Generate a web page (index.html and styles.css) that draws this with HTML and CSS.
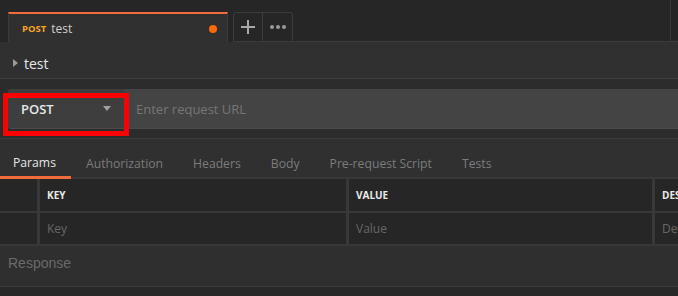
FILE: index.html
```html
<!DOCTYPE html>
<html lang="en">
<head>
  <meta charset="UTF-8" />
  <meta name="viewport" content="width=device-width, initial-scale=1.0"/>
  <title>Request Builder</title>
  <link rel="stylesheet" href="styles.css">
</head>
<body>
  <div class="tabbar">
    <div class="tab">
      <span class="tab-method">POST</span>
      <span class="tab-name">test</span>
      <span class="tab-dot"></span>
    </div>
    <div class="tab-btn first">
      <svg width="14" height="14" viewBox="0 0 14 14"><path d="M7 0v14M0 7h14" stroke="#a8a8a8" stroke-width="2"/></svg>
    </div>
    <div class="tab-btn last">
      <svg width="16" height="4" viewBox="0 0 16 4"><circle cx="2" cy="2" r="2" fill="#9a9a9a"/><circle cx="8" cy="2" r="2" fill="#9a9a9a"/><circle cx="14" cy="2" r="2" fill="#9a9a9a"/></svg>
    </div>
    <div class="tabbar-fill"></div>
    <div class="tabbar-end"></div>
  </div>

  <div class="request">
    <div class="req-name">
      <span class="caret-right"></span>
      <span>test</span>
    </div>

    <div class="url-wrap">
      <div class="url-bar">
        <div class="method">
          <span>POST</span>
          <span class="caret-down"></span>
        </div>
        <div class="url-input">Enter request URL</div>
      </div>
      <div class="highlight"></div>
    </div>

    <div class="tabs">
      <div class="tabs-item active">Params</div>
      <div class="tabs-item">Authorization</div>
      <div class="tabs-item">Headers</div>
      <div class="tabs-item">Body</div>
      <div class="tabs-item">Pre-request Script</div>
      <div class="tabs-item">Tests</div>
    </div>

    <div class="params">
      <div class="row head">
        <div class="cell check"></div>
        <div class="cell key">KEY</div>
        <div class="cell value">VALUE</div>
        <div class="cell desc">DESCRIPTION</div>
      </div>
      <div class="row">
        <div class="cell check"></div>
        <div class="cell key ph">Key</div>
        <div class="cell value ph">Value</div>
        <div class="cell desc ph">Description</div>
      </div>
    </div>

    <div class="response">Response</div>
  </div>
</body>
</html>
```

FILE: styles.css
```css
body {
  margin: 0;
  background: #282828;
  font-family: "Open Sans", "Liberation Sans", sans-serif;
  color: #e0e0e0;
  width: 678px;
  height: 296px;
  overflow: hidden;
}

.tabbar {
  display: flex;
  align-items: flex-end;
  height: 42px;
  padding-left: 8px;
  background: #262626;
  box-sizing: border-box;
}

.tabbar-fill {
  flex: 1;
  height: 42px;
  border-bottom: 1px solid #3a3a3a;
  border-right: 1px solid #3a3a3a;
  box-sizing: border-box;
}

.tabbar-end {
  width: 7px;
  height: 42px;
  border-bottom: 1px solid #3a3a3a;
  box-sizing: border-box;
}

.tab {
  display: flex;
  align-items: center;
  width: 220px;
  height: 30px;
  box-sizing: border-box;
  padding: 1px 10px 0 13px;
  background: #303030;
  border-top: 2px solid #f26b3a;
  border-left: 1px solid #3c3c3c;
  border-right: 1px solid #3c3c3c;
}

.tab-method {
  font-size: 9.5px;
  font-weight: 700;
  color: #f5a623;
  margin-right: 5px;
}

.tab-name {
  font-size: 12px;
  color: #cfcfcf;
  flex: 1;
}

.tab-dot {
  width: 8px;
  height: 8px;
  border-radius: 50%;
  background: #ff6a00;
}

.tab-btn {
  display: flex;
  align-items: center;
  justify-content: center;
  width: 30px;
  height: 30px;
  box-sizing: border-box;
  border: 1px solid #3c3c3c;
  border-bottom-color: #3a3a3a;
  background: #262626;
}

.tab-btn.first {
  margin-left: 5px;
  border-radius: 3px 0 0 0;
}

.tab-btn.last {
  border-left: none;
  border-radius: 0 3px 0 0;
}

.request {
  background: #303030;
}

.req-name {
  display: flex;
  align-items: center;
  height: 37px;
  padding: 6px 0 0 13px;
  font-size: 14px;
  color: #e6e6e6;
  border-bottom: 1px solid #3d3d3d;
  box-sizing: border-box;
}

.caret-right {
  width: 0;
  height: 0;
  border-top: 4px solid transparent;
  border-bottom: 4px solid transparent;
  border-left: 5px solid #9a9a9a;
  margin-right: 6px;
}

.url-wrap {
  position: relative;
  padding: 10px 0 9px 8px;
  background: #2c2c2c;
  border-bottom: 1px solid #3a3a3a;
}

.url-bar {
  display: flex;
  height: 40px;
  background: #444;
  border-radius: 3px 0 0 3px;
  border-bottom: 1px solid #4a4a4a;
  box-sizing: border-box;
}

.method {
  display: flex;
  align-items: center;
  justify-content: space-between;
  width: 116px;
  padding: 0 13px;
  box-sizing: border-box;
  font-size: 13px;
  font-weight: 600;
  color: #e8e8e8;
  background: #3e3e3e;
  border-radius: 3px 0 0 3px;
}

.caret-down {
  width: 0;
  height: 0;
  border-left: 4px solid transparent;
  border-right: 4px solid transparent;
  border-top: 5px solid #a0a0a0;
}

.url-input {
  display: flex;
  align-items: center;
  padding-left: 12px;
  font-size: 13px;
  color: #767676;
}

.highlight {
  position: absolute;
  left: 3px;
  top: 14px;
  width: 126px;
  height: 43px;
  box-sizing: border-box;
  border: 5px solid #ff0000;
}

.tabs {
  display: flex;
  height: 40px;
  border-bottom: 2px solid #383838;
  box-sizing: border-box;
}

.tabs-item {
  display: flex;
  align-items: center;
  padding: 10px 15px 0 15px;
  font-size: 12.2px;
  color: #7c7c7c;
}

.tabs-item.active {
  padding-left: 13px;
  color: #e6e6e6;
  border-bottom: 3px solid #f26b3a;
  margin-bottom: -2px;
}

.params {
  background: #262626;
}

.row {
  display: flex;
  height: 31px;
  border-bottom: 2px solid #383838;
}

.row.head {
  height: 32px;
}

.cell {
  display: flex;
  align-items: center;
  padding-left: 7px;
  box-sizing: border-box;
  border-right: 3px solid #383838;
  font-size: 12px;
  white-space: nowrap;
  overflow: hidden;
}

.head .cell {
  font-size: 10px;
  font-weight: 700;
  color: #eaeaea;
}

.cell.ph {
  color: #666;
}

.cell.check { width: 40px; padding: 0; }
.cell.key { width: 309px; }
.cell.value { width: 306px; }
.cell.desc { flex: 1; border-right: none; }

.response {
  display: flex;
  align-items: center;
  height: 41px;
  padding: 0 0 6px 8px;
  box-sizing: border-box;
  font-size: 14px;
  color: #6a6a6a;
  background: #2f2f2f;
  border-bottom: 1px solid #3a3a3a;
  font-family: "Liberation Sans", Arial, sans-serif;
}
```
